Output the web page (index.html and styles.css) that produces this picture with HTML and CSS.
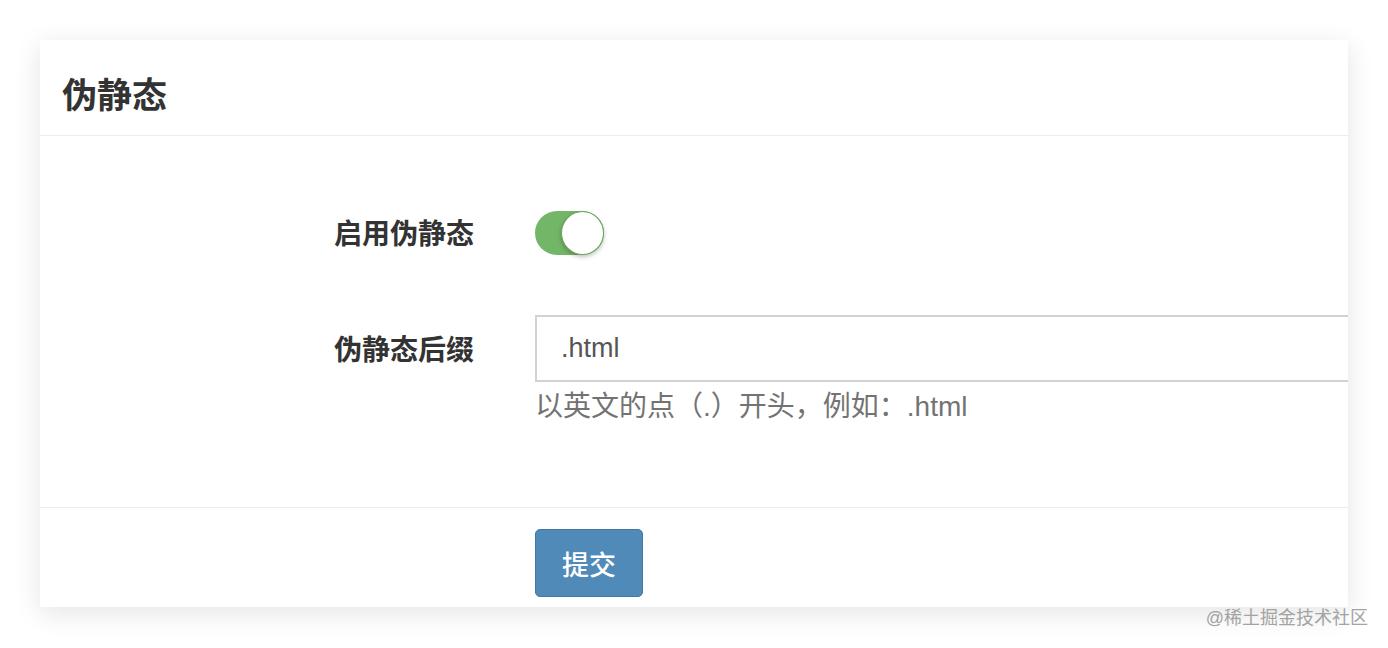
FILE: index.html
```html
<!DOCTYPE html>
<html lang="zh-CN">
<head>
<meta charset="utf-8">
<title>伪静态</title>
<link rel="stylesheet" href="styles.css">
</head>
<body>
<div class="card">
  <div class="card-header"><h2 class="title">伪静态</h2></div>
  <div class="card-body">
    <div class="row row-toggle">
      <label class="label">启用伪静态</label>
      <div class="control">
        <div class="switch on"><span class="knob"></span></div>
      </div>
    </div>
    <div class="row row-input">
      <label class="label">伪静态后缀</label>
      <div class="control">
        <input class="input" type="text" value=".html">
        <div class="help">以英文的点（.）开头，例如：.html</div>
      </div>
    </div>
  </div>
  <div class="card-footer">
    <div class="spacer"></div>
    <button class="btn" type="button">提交</button>
  </div>
</div>
<div class="watermark">@稀土掘金技术社区</div>
</body>
</html>
```
FILE: styles.css
```css
html, body {
  margin: 0;
  padding: 0;
  background: #ffffff;
}
body {
  width: 1388px;
  height: 648px;
  overflow: hidden;
  position: relative;
  font-family: "Liberation Sans", "Noto Sans CJK SC", sans-serif;
  color: #333;
  padding-top: 40px;
  box-sizing: border-box;
}
.card {
  margin-left: 40px;
  width: 1308px;
  height: 567px;
  background: #fff;
  box-shadow: 0 6px 26px rgba(0, 0, 0, 0.11);
  overflow: hidden;
  display: flex;
  flex-direction: column;
}
.card-header {
  height: 95px;
  border-bottom: 1px solid #ececec;
  display: flex;
  align-items: center;
  padding-left: 22px;
}
.title {
  margin: 0;
  font-size: 35px;
  font-weight: 700;
  color: #333;
  padding-top: 9px;
}
.card-body {
  height: 372px;
  padding-top: 75px;
  box-sizing: border-box;
  border-bottom: 1px solid #ececec;
}
.row {
  display: grid;
  grid-template-columns: 495px 1fr;
}
.label {
  text-align: right;
  padding-right: 61px;
  font-size: 28px;
  font-weight: 700;
  color: #333;
}
.row-toggle {
  height: 44px;
  align-items: center;
}
.row-toggle .label {
  margin-top: -3px;
}
.row-input {
  margin-top: 60px;
}
.row-input .label {
  line-height: 67px;
  padding-top: 2px;
}
.switch {
  width: 69px;
  height: 44px;
  border-radius: 22px;
  background: #74b667;
  position: relative;
  box-sizing: border-box;
}
.knob {
  position: absolute;
  right: 0;
  top: 0;
  width: 43px;
  height: 44px;
  border-radius: 50%;
  background: #fff;
  box-sizing: border-box;
  border: 1px solid #6aa55d;
  box-shadow: 0 2px 4px rgba(0, 0, 0, 0.25);
}
.input {
  display: block;
  width: 900px;
  height: 67px;
  box-sizing: border-box;
  border: 2px solid #d2d2d2;
  padding: 0 24px;
  font-family: "Liberation Sans", "Noto Sans CJK SC", sans-serif;
  font-size: 27px;
  color: #555;
  outline: none;
  margin: 0;
}
.help {
  margin-top: 7px;
  font-size: 28px;
  line-height: 36px;
  color: #737373;
}
.card-footer {
  display: grid;
  grid-template-columns: 495px 1fr;
  padding-top: 21px;
}
.btn {
  justify-self: start;
  width: 108px;
  height: 68px;
  background: #4f8ab9;
  border: 1px solid #3f77a5;
  border-radius: 5px;
  color: #fff;
  font-family: "Liberation Sans", "Noto Sans CJK SC", sans-serif;
  font-size: 27px;
  font-weight: 500;
  padding: 0;
}
.watermark {
  position: absolute;
  right: 20px;
  top: 605px;
  font-family: "Liberation Sans", "Noto Sans CJK SC", sans-serif;
  font-size: 18px;
  color: #a3a3a3;
  line-height: 26px;
}
```
